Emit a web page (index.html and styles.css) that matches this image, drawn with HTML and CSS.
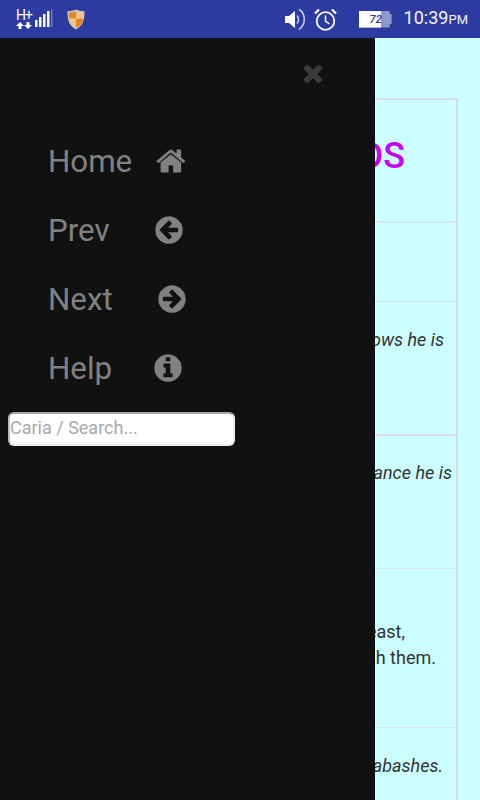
FILE: index.html
```html
<!DOCTYPE html>
<html lang="en">
<head>
<meta charset="utf-8">
<title>Words</title>
<link rel="stylesheet" href="styles.css">
</head>
<body>
<div class="screen">
  <header class="status">
    <div class="status-left">
      <svg class="i-net" width="19" height="21" viewBox="0 0 19 21"><text x="0" y="11" class="net-h">H+</text><path d="M4 13l4 4H5.500v3h-3v-3H0zM12 20l-4-4h2.500v-3h3v3H16z" fill="#fff"/></svg>
      <svg class="i-signal" width="18" height="20" viewBox="0 0 18 20"><path d="M0 11h2.500v7H0zM4 8h2.500v10H4zM8 5h2.500v13H8zM12 2h2.500v16H12z" fill="#fff"/><path d="M16 0h1.500v18H16z" fill="#6f7ac0"/></svg>
      <svg class="i-shield" width="18" height="21" viewBox="0 0 18 21"><path d="M9 0.500c3 1.300 5.500 1.600 8.500 1.600 0 8 -0.500 14-8.500 18.400C1 16.100 .5 10.100 .5 2.100 3.500 2.100 6 1.800 9 .5z" fill="#c8c4b8"/><path d="M9 2.500v7H2c0-2 0-4 .2-5.700C4.800 3.600 7 3.200 9 2.500zM9 9.500h7c-.4 4-2 7-7 9.200z" fill="#e8841c"/><path d="M9 2.500c2 .7 4.200 1.100 6.800 1.300.2 1.700.2 3.700.2 5.700H9zM9 9.500v9.200C4 16.500 2.400 13.500 2 9.500z" fill="#f2c48c"/></svg>
    </div>
    <div class="status-right">
      <svg class="i-speaker" width="21" height="23" viewBox="0 0 21 23"><path d="M0 8h4l6-5v17l-6-5H0z" fill="#fff"/><path d="M12 7.500c2 2 2 6 0 8" fill="none" stroke="#cfd3ee" stroke-width="1.500"/><path d="M14 1.500c6 3 8 14 0 20" fill="none" stroke="#cfd3ee" stroke-width="1.500"/></svg>
      <svg class="i-alarm" width="23" height="23" viewBox="0 0 23 23"><circle cx="11.500" cy="13" r="8.800" fill="none" stroke="#fff" stroke-width="1.800"/><path d="M11.500 7.500V13l4 3" fill="none" stroke="#fff" stroke-width="1.500"/><path d="M1 5.500L5 1.500M22 5.500L18 1.500" stroke="#fff" stroke-width="2.200"/></svg>
      <div class="battery"><span class="battery-fill"></span><span class="battery-num">72</span></div>
      <div class="clock">10:39<small class="clock-ampm">PM</small></div>
    </div>
  </header>

  <main class="page">
    <div class="sheet">
      <div class="row row-head"><h1 class="title">WORDS</h1></div>
      <div class="row row-a"></div>
      <div class="row row-b"><p class="line quote end-444">The one who knows he is</p></div>
      <div class="row row-c"><p class="line quote end-452">Out of his ignorance he is</p></div>
      <div class="row row-d"><p class="line end-405">In a time of feast,</p><p class="line end-436">all are friends with them.</p></div>
      <div class="row row-e"><p class="line quote end-443">Nothing ever abashes.</p></div>
    </div>

    <aside class="drawer">
      <div class="close-wrap">
        <svg class="close" viewBox="0 0 1792 1792"><path d="M1490 1322q0 40-28 68l-136 136q-28 28-68 28t-68-28l-294-294-294 294q-28 28-68 28t-68-28l-136-136q-28-28-28-68t28-68l294-294-294-294q-28-28-28-68t28-68l136-136q28-28 68-28t68 28l294 294 294-294q28-28 68-28t68 28l136 136q28 28 28 68t-28 68l-294 294 294 294q28 28 28 68z"/></svg>
      </div>
      <nav class="menu">
        <a class="item"><span class="label">Home</span><svg class="icon icon-home" viewBox="0 0 1792 1792"><path d="M1408 992v480q0 26-19 45t-45 19h-384v-384h-256v384h-384q-26 0-45-19t-19-45v-480q0-1 .5-3t.5-3l575-474 575 474q1 2 1 6zm223-69l-62 74q-8 9-21 11h-3q-13 0-21-7l-692-577-692 577q-12 8-24 7-13-2-21-11l-62-74q-8-10-7-23.500t11-21.500l719-599q32-26 76-26t76 26l244 204v-195q0-14 9-23t23-9h192q14 0 23 9t9 23v408l219 182q10 8 11 21.500t-7 23.500z"/></svg></a>
        <a class="item"><span class="label">Prev</span><svg class="icon icon-prev" viewBox="0 0 1792 1792"><path d="M1408 960v-128q0-26-19-45t-45-19h-502l189-189q19-19 19-45t-19-45l-91-91q-18-18-45-18t-45 18l-362 362-91 91q-18 18-18 45t18 45l91 91 362 362q18 18 45 18t45-18l91-91q18-18 18-45t-18-45l-189-189h502q26 0 45-19t19-45zm256-64q0 209-103 385.500t-279.500 279.500-385.500 103-385.500-103-279.500-279.500-103-385.500 103-385.500 279.500-279.500 385.500-103 385.500 103 279.500 279.500 103 385.500z"/></svg></a>
        <a class="item"><span class="label">Next</span><svg class="icon icon-next" viewBox="0 0 1792 1792"><path d="M1413 896q0-27-18-45l-91-91-362-362q-18-18-45-18t-45 18l-91 91q-18 18-18 45t18 45l189 189h-502q-26 0-45 19t-19 45v128q0 26 19 45t45 19h502l-189 189q-19 19-19 45t19 45l91 91q18 18 45 18t45-18l362-362 91-91q18-18 18-45zm251 0q0 209-103 385.500t-279.500 279.500-385.500 103-385.500-103-279.500-279.500-103-385.500 103-385.500 279.500-279.500 385.500-103 385.500 103 279.500 279.500 103 385.500z"/></svg></a>
        <a class="item"><span class="label">Help</span><svg class="icon icon-help" viewBox="0 0 1792 1792"><path d="M1152 1376v-160q0-14-9-23t-23-9h-96v-512q0-14-9-23t-23-9h-320q-14 0-23 9t-9 23v160q0 14 9 23t23 9h96v320h-96q-14 0-23 9t-9 23v160q0 14 9 23t23 9h448q14 0 23-9t9-23zm-128-896v-160q0-14-9-23t-23-9h-192q-14 0-23 9t-9 23v160q0 14 9 23t23 9h192q14 0 23-9t9-23zm640 416q0 209-103 385.500t-279.500 279.500-385.500 103-385.500-103-279.500-279.500-103-385.500 103-385.500 279.500-279.500 385.500-103 385.500 103 279.500 279.500 103 385.500z"/></svg></a>
      </nav>
      <input class="search" type="text" placeholder="Caria / Search...">
    </aside>
  </main>
</div>
</body>
</html>
```
FILE: styles.css
```css
* { box-sizing: border-box; }
html, body { margin: 0; padding: 0; }
body { font-family: Roboto, sans-serif; background: #ccffff; }
.screen { width: 480px; height: 800px; display: flex; flex-direction: column; overflow: hidden; }

.status { height: 38px; flex: none; background: #2d3a9f; display: flex; justify-content: space-between; align-items: center; color: #fff; padding: 0 12px 0 16px; }
.status-left, .status-right { display: flex; align-items: center; }
.i-net { display: block; }
.net-h { font: 400 14px Roboto, sans-serif; fill: #fff; letter-spacing: -1px; }
.i-shield { margin-left: 14px; }
.i-alarm { margin-left: 8px; }
.battery { position: relative; width: 33px; height: 17px; margin-left: 22px; background: #8f97cf; clip-path: polygon(0 0, 94% 0, 94% 20%, 100% 20%, 100% 80%, 94% 80%, 94% 100%, 0 100%); }
.battery-fill { position: absolute; left: 0; top: 0; bottom: 0; width: 22px; background: #fff; }
.battery-num { position: absolute; left: 11px; top: 2px; font: italic 500 11px/13px Roboto, sans-serif; color: #2d3a9f; }
.clock { margin-left: 12px; font: 400 18px/20px Roboto, sans-serif; color: #f4f5fb; }
.clock-ampm { font-size: 13px; }

.page { position: relative; flex: 1; min-height: 0; padding: 60px 22px 0; }
.sheet { height: 702px; border-top: 2px solid #d6dfe6; border-right: 2px solid #d8dce8; }
.row { border-bottom: 1px solid #d4e8ea; }
.row-head { height: 123px; border-bottom-width: 2px; padding: 33px 51px 0 0; }
.row-a { height: 79px; }
.row-b { height: 134px; border-bottom: 2px solid #dcdde6; padding-top: 25px; }
.row-c { height: 133px; padding-top: 24px; }
.row-d { height: 159px; padding-top: 50px; }
.row-e { padding-top: 25px; border-bottom: none; }
.title { margin: 0; text-align: right; font: 500 36px/46px Roboto, sans-serif; color: #c800f4; }
.line { margin: 0; font-size: 18px; line-height: 26px; color: #333; text-align: right; white-space: nowrap; }
.quote { font-style: italic; }
.end-444 { padding-right: 12px; }
.end-452 { padding-right: 4px; }
.end-405 { padding-right: 51px; }
.end-436 { padding-right: 20px; }
.end-443 { padding-right: 13px; }

.drawer { position: absolute; left: 0; top: 0; bottom: 0; width: 375px; background: #111; padding-left: 8px; }
.close-wrap { display: flex; justify-content: flex-end; padding: 21px 48px 0 0; height: 88px; }
.close { width: 28px; height: 28px; fill: #3a3a3a; }
.menu { display: flex; flex-direction: column; }
.item { height: 69px; display: flex; align-items: center; padding-left: 40px; color: #818181; }
.label { width: 106px; flex: none; padding-top: 2px; font: 400 31.300px/40px Roboto, sans-serif; color: #818181; }
.icon { width: 32px; height: 32px; fill: #818181; display: block; }
.icon-home { margin-left: 2px; }
.icon-prev { margin-left: -1px; }
.icon-next { margin-left: 2px; }
.icon-help { margin-left: -2px; }
.search { display: block; width: 227px; height: 34px; margin-top: 10px; padding: 0 0 4px; border: 2px solid #eee; border-top-color: #a8a8a8; border-left-color: #bdbdbd; border-radius: 6px; background: #fff; font: 400 18px Roboto, sans-serif; color: #333; outline: none; }
.search::placeholder { color: #a9a9a9; opacity: 1; }
```
